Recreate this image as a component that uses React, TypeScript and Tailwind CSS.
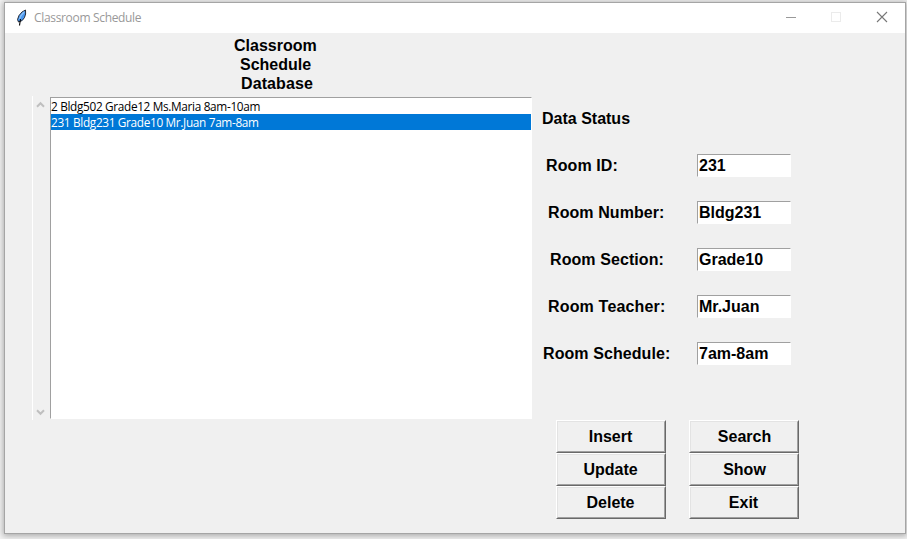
const fields = [
  { label: 'Room ID:', value: '231', pad: 'pl-[14px]', spacing: 'tracking-[0.1px]' },
  { label: 'Room Number:', value: 'Bldg231', pad: 'pl-[16px]', spacing: 'tracking-[0.08px]' },
  { label: 'Room Section:', value: 'Grade10', pad: 'pl-[18px]', spacing: 'tracking-[0.08px]' },
  { label: 'Room Teacher:', value: 'Mr.Juan', pad: 'pl-[16px]', spacing: 'tracking-[0.17px]' },
  { label: 'Room Schedule:', value: '7am-8am', pad: 'pl-[11px]', spacing: 'tracking-[0.08px]' },
];

const actions = [
  { name: 'Insert', pad: 'pr-px' },
  { name: 'Search', pad: 'pl-px' },
  { name: 'Update', pad: 'pr-px' },
  { name: 'Show', pad: 'pl-px' },
  { name: 'Delete', pad: 'pr-px' },
  { name: 'Exit', pad: 'pr-px' },
];

function Feather() {
  return (
    <svg width="12" height="18" viewBox="0 0 12 18" className="ml-[11px] shrink-0">
      <path d="M9.5 1 6 3 3 6.5 1.5 10.5 2.5 13 6.2 11.5 8.5 8.5 9.6 5Z" fill="#4b97ee" stroke="#151922" strokeWidth="0.9" />
      <path d="M8 3 5 6.5 3.5 10" fill="none" stroke="#8ac0f8" strokeWidth="1.4" />
      <path d="M4.5 10 3.5 16.5" fill="none" stroke="#000" strokeWidth="1.1" />
    </svg>
  );
}

function TitleBar() {
  return (
    <header className="flex h-[30px] items-center bg-white">
      <Feather />
      <h1 className="ml-[6px] grow whitespace-pre font-['Open_Sans','Noto_Sans',sans-serif] text-[12px] leading-[16px] tracking-[-0.33px] text-[#999]">Classroom Schedule</h1>
      <svg width="130" height="30" viewBox="0 0 130 30" fill="none" shapeRendering="crispEdges">
        <path d="M11 14.5h10" stroke="#999" />
        <rect x="56.5" y="9.5" width="9" height="9" stroke="#ebebeb" />
        <path d="m102 9 10 10m0-10-10 10" stroke="#777" strokeWidth="1.1" shapeRendering="auto" />
      </svg>
    </header>
  );
}

function Schedule() {
  return (
    <div className="mt-[3px] flex h-[324px]">
      <div className="flex w-[18px] flex-col items-center justify-between border-l border-white pt-[5px] pr-[2px] pb-[4px]">
        <svg width="9" height="7" viewBox="0 0 9 7"><path d="m1 5.7 3.5-3.5L8 5.7" fill="none" stroke="#bfbfbf" strokeWidth="2" /></svg>
        <svg width="9" height="7" viewBox="0 0 9 7"><path d="m1 1.3 3.5 3.5L8 1.3" fill="none" stroke="#bfbfbf" strokeWidth="2" /></svg>
      </div>
      <ul className="mt-px h-[322px] w-[482px] border border-t-[#a0a0a0] border-r-white border-b-white border-l-[#a0a0a0] bg-white font-['Open_Sans','Noto_Sans',sans-serif] text-[11.8px] leading-[16px] font-normal whitespace-pre">
        <li className="h-4 tracking-[-0.33px]">2 Bldg502 Grade12 Ms.Maria 8am-10am</li>
        <li className="h-4 bg-[#0078d7] tracking-[-0.33px] text-white">231 Bldg231 Grade10 Mr.Juan 7am-8am</li>
      </ul>
    </div>
  );
}

export default function App() {
  return (
    <div className="h-[539px] w-[907px] overflow-hidden bg-[#f3f3f3] pt-[2px] pl-[4px] font-['Liberation_Sans',Arial,sans-serif] text-black">
      <div className="h-[532px] w-[902px] border border-[#a5a5a5] bg-white shadow-[0_1px_6px_1px_rgba(0,0,0,0.3)]">
        <TitleBar />
        <main className="flex h-[500px] bg-[#f0f0f0] text-[16px] leading-[19px] font-bold">
          <section className="w-[527px] pt-[3px] pl-[27px]">
            <h2 className="ml-[202px] w-[83px] whitespace-pre">
              <span className="block">Classroom</span>
              <span className="block pl-[6px]">Schedule</span>
              <span className="block pl-[7px] tracking-[0.1px]">Database</span>
            </h2>
            <Schedule />
          </section>
          <section className="pt-[76px]">
            <p className="pl-[10px]">Data Status</p>
            <div className="mt-[26px] flex flex-col gap-[24px]">
              {fields.map((f) => (
                <label key={f.label} className="flex h-[23px] items-center whitespace-pre">
                  <span className={`w-[165px] ${f.pad} ${f.spacing}`}>{f.label}</span>
                  <input readOnly value={f.value} className="h-[23px] w-[94px] border border-t-[#a0a0a0] border-r-white border-b-white border-l-[#a0a0a0] bg-white pl-px outline-none" />
                </label>
              ))}
            </div>
            <div className="mt-[55px] ml-[24px] grid grid-cols-[110px_110px] gap-x-[23px]">
              {actions.map((a) => (
                <button key={a.name} className="h-[33px] border border-t-white border-r-[#696969] border-b-[#696969] border-l-white bg-[#f0f0f0]">
                  <span className={`flex h-full items-center justify-center border border-t-[#e3e3e3] border-r-[#a0a0a0] border-b-[#a0a0a0] border-l-[#e3e3e3] ${a.pad}`}>{a.name}</span>
                </button>
              ))}
            </div>
          </section>
        </main>
      </div>
    </div>
  );
}
